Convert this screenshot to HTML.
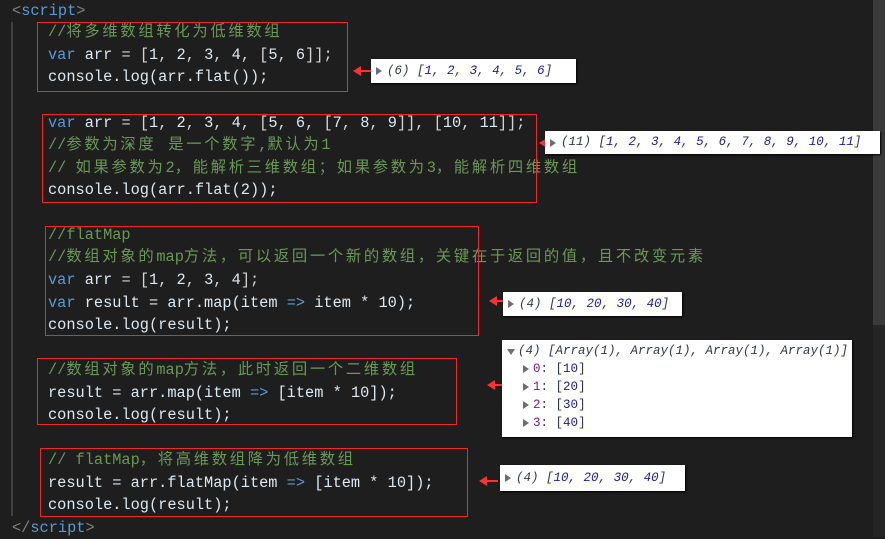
<!DOCTYPE html>
<html><head><meta charset="utf-8"><style>
body{margin:0;width:885px;height:537px;background:#1e1e1e;overflow:hidden;position:relative;font-family:"Liberation Mono","Noto Sans CJK SC",monospace;font-size:15.3px;color:#d4d4d4}
.l{position:absolute;left:48px;height:22px;line-height:22px;white-space:pre;margin-top:1px}
.c{color:#6a9955}.k{color:#569cd6}.v{color:#dce8f2}.n{color:#dce8f2}
.z{letter-spacing:2.7px}
.b{position:absolute;border:1px solid #f02828;z-index:5}
.o{position:absolute;background:#fff;font-family:"Liberation Mono",monospace;font-style:italic;font-size:12.5px;color:#303942;white-space:pre;line-height:18px;padding-left:16px;box-shadow:1px 1px 2px #000}
.o .q{color:#1a1aa6}
.t{position:absolute;width:0;height:0;border-top:4px solid transparent;border-bottom:4px solid transparent;border-left:6px solid #6e6e6e}
.a{position:absolute;height:2px;background:#ff3030;width:12px}
.a:before{content:"";position:absolute;left:-7px;top:-4px;border-top:5px solid transparent;border-bottom:5px solid transparent;border-right:8px solid #ff3030}
.p{color:#881280;font-style:normal}
</style></head><body>
<div style="position:absolute;left:11px;top:22px;width:2px;height:494px;background:#404040"></div>
<div style="position:absolute;left:873px;top:0;width:12px;height:537px;background:#252526"></div>
<div style="position:absolute;left:873px;top:0;width:12px;height:325px;background:#3a3a3a"></div>
<div class="l" style="left:12px;top:-1px"><span style="color:#808080">&lt;</span><span class="k">script</span><span style="color:#808080">&gt;</span></div>

<div class="l c" style="top:20px">//<span class="z">将多维数组转化为低维数组</span></div>
<div class="l" style="top:43px"><span class="k">var</span> <span class="v">arr</span> = [<span class="n">1</span>, <span class="n">2</span>, <span class="n">3</span>, <span class="n">4</span>, [<span class="n">5</span>, <span class="n">6</span>]];</div>
<div class="l v" style="top:65px">console.log(arr.flat());</div>

<div class="l" style="top:111px"><span class="k">var</span> <span class="v">arr</span> = [<span class="n">1</span>, <span class="n">2</span>, <span class="n">3</span>, <span class="n">4</span>, [<span class="n">5</span>, <span class="n">6</span>, [<span class="n">7</span>, <span class="n">8</span>, <span class="n">9</span>]], [<span class="n">10</span>, <span class="n">11</span>]];</div>
<div class="l c" style="top:133px">//<span class="z">参数为深度 是一个数字</span>,<span class="z">默认为</span>1</div>
<div class="l c" style="top:156px">// <span class="z">如果参数为</span>2<span class="z">，能解析三维数组；如果参数为</span>3<span class="z">，能解析四维数组</span></div>
<div class="l v" style="top:178px">console.log(arr.flat(<span class="n">2</span>));</div>

<div class="l c" style="top:223px">//flatMap</div>
<div class="l c" style="top:245px">//<span class="z">数组对象的</span>map<span class="z">方法，可以返回一个新的数组，关键在于返回的值，且不改变元素</span></div>
<div class="l" style="top:268px"><span class="k">var</span> <span class="v">arr</span> = [<span class="n">1</span>, <span class="n">2</span>, <span class="n">3</span>, <span class="n">4</span>];</div>
<div class="l v" style="top:291px"><span class="k">var</span> result = arr.map(item <span class="k">=&gt;</span> item * <span class="n">10</span>);</div>
<div class="l v" style="top:313px">console.log(result);</div>

<div class="l c" style="top:358px">//<span class="z">数组对象的</span>map<span class="z">方法，此时返回一个二维数组</span></div>
<div class="l v" style="top:381px">result = arr.map(item <span class="k">=&gt;</span> [item * <span class="n">10</span>]);</div>
<div class="l v" style="top:403px">console.log(result);</div>

<div class="l c" style="top:448px">// flatMap<span class="z">，将高维数组降为低维数组</span></div>
<div class="l v" style="top:471px">result = arr.flatMap(item <span class="k">=&gt;</span> [item * <span class="n">10</span>]);</div>
<div class="l v" style="top:493px">console.log(result);</div>
<div class="l" style="left:12px;top:516px"><span style="color:#808080">&lt;/</span><span class="k">script</span><span style="color:#808080">&gt;</span></div>

<div class="b" style="left:37px;top:22px;width:309px;height:68px"></div>
<div class="b" style="left:42px;top:114px;width:493px;height:87px"></div>
<div class="b" style="left:45px;top:226px;width:432px;height:108px"></div>
<div class="b" style="left:37px;top:358px;width:418px;height:65px"></div>
<div class="b" style="left:40px;top:448px;width:426px;height:67px"></div>

<div class="a" style="left:360px;top:70px"></div>
<div class="a" style="left:546px;top:142px"></div>
<div class="a" style="left:496px;top:300px"></div>
<div class="a" style="left:494px;top:384px"></div>
<div class="a" style="left:486px;top:480px"></div>

<div class="o" style="left:371px;top:59px;width:189px;height:24px;line-height:24px"><span class="t" style="left:5px;top:8px"></span>(6) [<span class="q">1</span>, <span class="q">2</span>, <span class="q">3</span>, <span class="q">4</span>, <span class="q">5</span>, <span class="q">6</span>]</div>
<div class="o" style="left:545px;top:131px;width:319px;height:23px;line-height:23px"><span class="t" style="left:5px;top:8px"></span>(11) [<span class="q">1</span>, <span class="q">2</span>, <span class="q">3</span>, <span class="q">4</span>, <span class="q">5</span>, <span class="q">6</span>, <span class="q">7</span>, <span class="q">8</span>, <span class="q">9</span>, <span class="q">10</span>, <span class="q">11</span>]</div>
<div class="o" style="left:503px;top:292px;width:163px;height:24px;line-height:24px"><span class="t" style="left:5px;top:8px"></span>(4) [<span class="q">10</span>, <span class="q">20</span>, <span class="q">30</span>, <span class="q">40</span>]</div>
<div class="o" style="left:502px;top:340px;width:334px;height:95px;padding-top:2px"><span style="position:absolute;left:5px;top:9px;border-left:4px solid transparent;border-right:4px solid transparent;border-top:6px solid #6e6e6e"></span>(4) [Array(1), Array(1), Array(1), Array(1)]
<span style="font-style:normal">  <span class="p">0</span>: [<span class="q">10</span>]
  <span class="p">1</span>: [<span class="q">20</span>]
  <span class="p">2</span>: [<span class="q">30</span>]
  <span class="p">3</span>: [<span class="q">40</span>]</span>
<span class="t" style="left:21px;top:25px"></span><span class="t" style="left:21px;top:43px"></span><span class="t" style="left:21px;top:61px"></span><span class="t" style="left:21px;top:79px"></span></div>
<div class="o" style="left:500px;top:465px;width:169px;height:26px;line-height:26px"><span class="t" style="left:5px;top:9px"></span>(4) [<span class="q">10</span>, <span class="q">20</span>, <span class="q">30</span>, <span class="q">40</span>]</div>
</body></html>
